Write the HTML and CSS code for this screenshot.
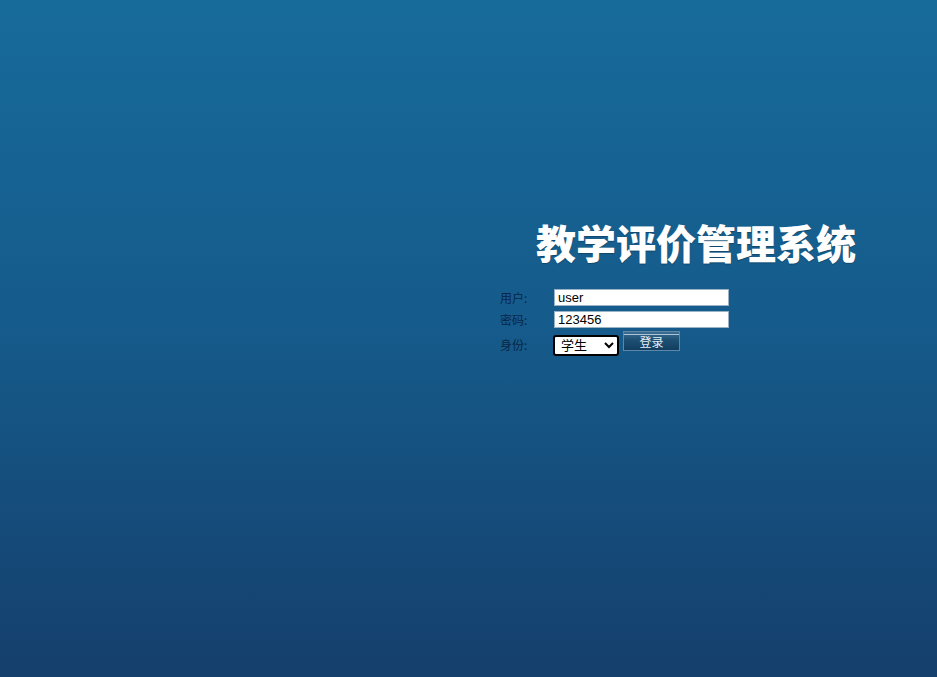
FILE: index.html
```html
<!DOCTYPE html>
<html lang="zh-CN">
<head>
<meta charset="utf-8">
<title>教学评价管理系统</title>
<link rel="stylesheet" href="styles.css">
</head>
<body>
<div class="page">
  <h1 class="title">教学评价管理系统</h1>
  <form class="login">
    <label class="lbl" for="u">用户:</label>
    <input class="field" id="u" type="text" value="user">
    <label class="lbl" for="p">密码:</label>
    <input class="field" id="p" type="text" value="123456">
    <label class="lbl lbl-role" for="r">身份:</label>
    <div class="actions">
      <select class="role" id="r"><option>学生</option><option>教师</option><option>管理员</option></select>
      <button class="btn" type="button">登录</button>
    </div>
  </form>
</div>
</body>
</html>
```
FILE: styles.css
```css
html, body { margin: 0; padding: 0; }
body {
  width: 937px;
  height: 677px;
  background: linear-gradient(to bottom, #176b9b 0%, #155a8a 50%, #153f6c 100%);
  font-family: "Liberation Sans", "Noto Sans CJK SC", sans-serif;
  overflow: hidden;
}
.page {
  padding-top: 214px;
}
.title {
  margin: 0 0 0 536px;
  font-family: "Noto Sans CJK SC", sans-serif;
  font-weight: 900;
  font-size: 40px;
  line-height: 56px;
  color: #ffffff;
  letter-spacing: 0;
  text-shadow: 0 1px 1px rgba(0,0,0,0.25);
}
.login {
  margin: 19px 0 0 500px;
  display: grid;
  grid-template-columns: 53px auto;
  row-gap: 5px;
  align-items: center;
}
.lbl {
  font-family: "Noto Sans CJK SC", sans-serif;
  font-size: 12px;
  color: #082648;
  line-height: 17px;
}
.lbl-role { align-self: start; padding-top: 3px; }
.field {
  box-sizing: border-box;
  width: 175px;
  height: 17px;
  margin: 0 0 0 1px;
  padding: 0 3px;
  border: 1px solid #9ab2c6;
  background: #fff;
  font-family: "Liberation Sans", sans-serif;
  font-size: 13px;
  color: #000;
  outline: none;
}
.actions {
  display: flex;
  align-items: flex-start;
  gap: 4px;
  margin-top: -2px;
}
.role {
  box-sizing: border-box;
  width: 66px;
  height: 21px;
  margin-top: 4px;
  border: 2px solid #000;
  border-radius: 3px;
  background: #fff;
  font-family: "Liberation Sans", "Noto Sans CJK SC", sans-serif;
  font-size: 13px;
  color: #000;
  padding: 0 2px;
}
.btn {
  box-sizing: border-box;
  width: 57px;
  height: 20px;
  padding: 0;
  border: 1px solid #5f87a6;
  background:
    linear-gradient(to bottom, transparent 0, transparent 2px, #a9c4d8 2px, #a9c4d8 3px, transparent 3px),
    linear-gradient(to bottom, #3c6f92 0%, #1d4f73 45%, #113e60 100%);
  font-family: "Noto Sans CJK SC", sans-serif;
  font-size: 12px;
  line-height: 17px;
  color: #e6eef5;
  cursor: pointer;
}
```
